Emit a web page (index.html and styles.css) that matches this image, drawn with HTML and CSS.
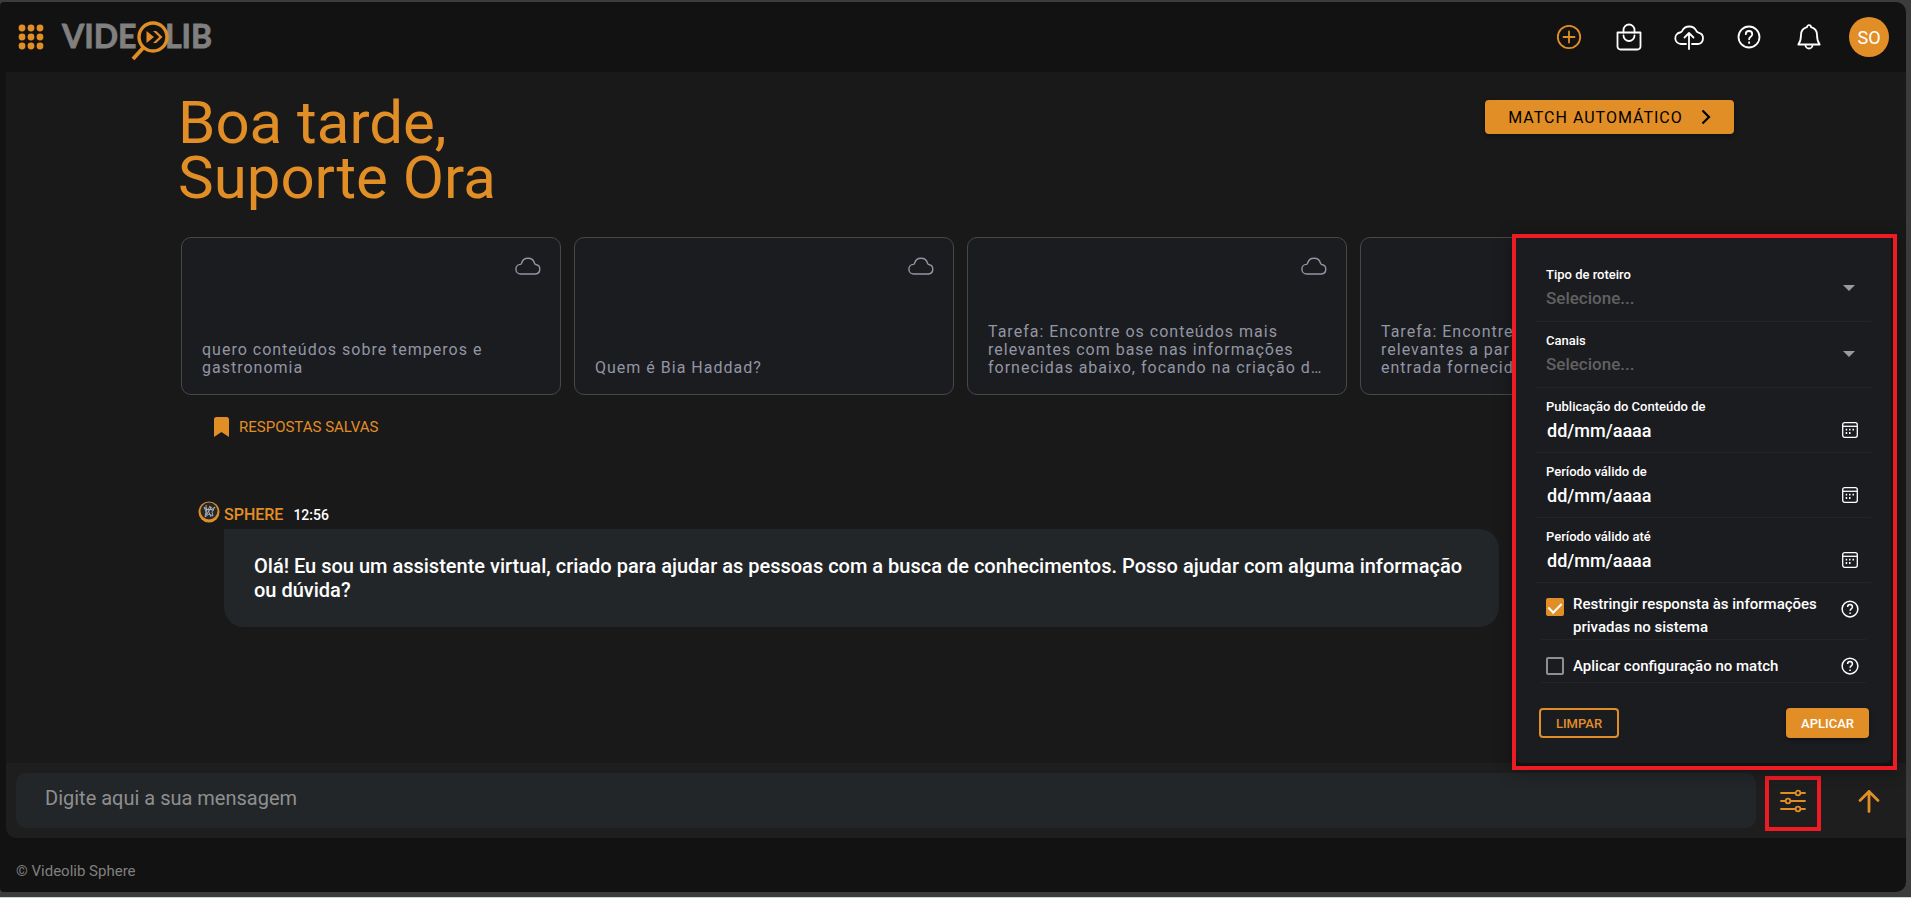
FILE: index.html
```html
<!DOCTYPE html>
<html lang="pt-BR">

<head>
    <meta charset="UTF-8">
    <meta name="viewport" content="width=device-width, initial-scale=1.0">
    <title>Videolib Sphere</title>
    <link rel="stylesheet" href="styles.css">
</head>

<body>
    <div class="window">
        <header class="topbar">
            <button class="icon-btn apps" aria-label="Aplicativos">
                <svg width="26" height="26" viewBox="0 0 26 26" fill="currentColor">
                    <circle cx="4" cy="4" r="3.4"/><circle cx="13" cy="4" r="3.4"/><circle cx="22" cy="4" r="3.4"/>
                    <circle cx="4" cy="13" r="3.4"/><circle cx="13" cy="13" r="3.4"/><circle cx="22" cy="13" r="3.4"/>
                    <circle cx="4" cy="22" r="3.4"/><circle cx="13" cy="22" r="3.4"/><circle cx="22" cy="22" r="3.4"/>
                </svg>
            </button>
            <a href="#" class="logo" aria-label="Videolib">
                <svg width="152" height="42" viewBox="0 0 152 42">
                    <text x="0" y="29" class="logo-text">VIDE</text>
                    <text x="103" y="29" class="logo-text">LIB</text>
                    <circle cx="91" cy="18" r="15" fill="#121212"/>
                    <circle cx="91" cy="18" r="14" fill="none" stroke="#e28e26" stroke-width="3.4"/>
                    <path d="M81 29 71 40" fill="none" stroke="#e28e26" stroke-width="4"/>
                    <path d="M84.500 12v12l7.500-6zM91 12h3.200l6.300 6-6.300 6H91l6.300-6z" fill="#e28e26"/>
                </svg>
            </a>
            <nav class="tools">
                <button class="icon-btn orange" aria-label="Novo">
                    <svg width="26" height="26" viewBox="0 0 26 26">
                        <circle cx="13" cy="13" r="11.200"/><path d="M13 7.500v11M7.500 13h11"/>
                    </svg>
                </button>
                <button class="icon-btn" aria-label="Loja">
                    <svg width="28" height="28" viewBox="0 0 28 28">
                        <path d="M2.500 9.500h23v14a3 3 0 0 1-3 3h-17a3 3 0 0 1-3-3z"/>
                        <path d="M8.500 9.500V7a5.500 5.500 0 0 1 11 0v2.500M8.500 12.500a5.500 5.500 0 0 0 11 0"/>
                    </svg>
                </button>
                <button class="icon-btn" aria-label="Enviar">
                    <svg width="32" height="28" viewBox="0 0 32 28">
                        <path d="M13 21H8A5.800 5.800 0 0 1 7 9.500c1-.2 1.500-.5 2-1.400a8 8 0 0 1 14.500 0c.4.900.9 1.200 2 1.500A5.800 5.800 0 0 1 25 21h-6"/>
                        <path d="M16 26V10M11.500 14.500 16 10l4.500 4.500"/>
                    </svg>
                </button>
                <button class="icon-btn" aria-label="Ajuda">
                    <svg width="24" height="24" viewBox="0 0 24 24">
                        <circle cx="12" cy="12" r="10.500"/>
                        <path d="M8.800 9.200a3.200 3.200 0 0 1 6.400 0c0 2.600-3.100 2.500-3.100 5M12.100 17.200v.8"/>
                    </svg>
                </button>
                <button class="icon-btn" aria-label="Notificações">
                    <svg width="26" height="28" viewBox="0 0 26 28">
                        <path d="M11 4.200a2 2 0 0 1 4 0c4 1 6 3.800 6 7.800 0 5 .8 7 2.700 9.500H2.300C4.200 19 5 17 5 12c0-4 2-6.800 6-7.800z"/>
                        <path d="M9.500 22a3.500 3.500 0 0 0 7 0"/>
                    </svg>
                </button>
                <button class="avatar">SO</button>
            </nav>
        </header>

        <main class="content">
            <section class="intro">
                <h1>Boa tarde,<br>Suporte Ora</h1>
                <button class="match-btn">MATCH AUTOMÁTICO
                    <svg width="10" height="16" viewBox="0 0 10 16"><path d="M1.500 1.500 8 8l-6.500 6.500"/></svg>
                </button>
            </section>

            <section class="cards">
                <article class="card">
                    <svg class="cloud" width="26" height="20" viewBox="0 0 26 20"><path d="M6 18a4.800 4.800 0 0 1-.6-9.600c.8-.1 1-.4 1.200-1.200a6.700 6.700 0 0 1 12.900 0c.2.800.5 1.100 1.300 1.300A4.800 4.800 0 0 1 20.500 18z"/></svg>
                    <p>quero conteúdos sobre temperos e gastronomia</p>
                </article>
                <article class="card">
                    <svg class="cloud" width="26" height="20" viewBox="0 0 26 20"><path d="M6 18a4.800 4.800 0 0 1-.6-9.600c.8-.1 1-.4 1.200-1.200a6.700 6.700 0 0 1 12.900 0c.2.800.5 1.100 1.300 1.300A4.800 4.800 0 0 1 20.500 18z"/></svg>
                    <p>Quem é Bia Haddad?</p>
                </article>
                <article class="card">
                    <svg class="cloud" width="26" height="20" viewBox="0 0 26 20"><path d="M6 18a4.800 4.800 0 0 1-.6-9.600c.8-.1 1-.4 1.200-1.200a6.700 6.700 0 0 1 12.900 0c.2.800.5 1.100 1.300 1.300A4.800 4.800 0 0 1 20.500 18z"/></svg>
                    <p>Tarefa: Encontre os conteúdos mais relevantes com base nas informações fornecidas abaixo, focando na criação d…</p>
                </article>
                <article class="card">
                    <svg class="cloud" width="26" height="20" viewBox="0 0 26 20"><path d="M6 18a4.800 4.800 0 0 1-.6-9.600c.8-.1 1-.4 1.200-1.200a6.700 6.700 0 0 1 12.900 0c.2.800.5 1.100 1.300 1.300A4.800 4.800 0 0 1 20.500 18z"/></svg>
                    <p>Tarefa: Encontre<br>relevantes a par<br>entrada fornecid</p>
                </article>
            </section>

            <button class="saved-btn">
                <svg width="15" height="20" viewBox="0 0 15 20"><path d="M2.500 0h10A2.500 2.500 0 0 1 15 2.500V20l-7.500-5L0 20V2.500A2.500 2.500 0 0 1 2.500 0z" fill="currentColor"/></svg>
                RESPOSTAS SALVAS
            </button>

            <section class="message">
                <div class="message-head">
                    <svg width="22" height="22" viewBox="0 0 22 22">
                        <circle cx="11" cy="11" r="10.500" fill="#e28e26"/>
                        <circle cx="11" cy="10" r="8.500" fill="#24282d"/>
                        <path d="m6 6 4 3 2-4 1 4 4-3-3 5 1 4-4-2-4 3 1-5zM8 4l1 10M14 6 8 14M7 8l9 1M10 9l3 7" fill="none" stroke="#b5b5b5" stroke-width=".9"/>
                    </svg>
                    <strong>SPHERE</strong>
                    <time>12:56</time>
                </div>
                <p class="bubble">Olá! Eu sou um assistente virtual, criado para ajudar as pessoas com a busca de conhecimentos. Posso ajudar com alguma informação ou dúvida?</p>
            </section>
        </main>

        <form class="composer">
            <input type="text" class="message-input" placeholder="Digite aqui a sua mensagem" aria-label="Mensagem">
            <button type="button" class="icon-btn filter-btn" aria-label="Filtros">
                <svg width="26" height="24" viewBox="0 0 26 24">
                    <path d="M1 4h14M21 4h4M1 12h4M11 12h14M1 20h14M21 20h4"/>
                    <circle cx="18" cy="4" r="2.300"/><circle cx="8" cy="12" r="2.300"/><circle cx="18" cy="20" r="2.300"/>
                </svg>
            </button>
            <button type="button" class="icon-btn send-btn" aria-label="Enviar mensagem">
                <svg width="22" height="24" viewBox="0 0 22 24"><path d="M11 22.500V2.500M2 11.500l9-9 9 9"/></svg>
            </button>

            <div class="highlight">
                <div class="panel">
                    <div class="field">
                        <div class="field-main">
                            <label for="tipo">Tipo de roteiro</label>
                            <select id="tipo"><option>Selecione...</option></select>
                        </div>
                        <svg class="caret" width="12" height="6" viewBox="0 0 12 6"><path d="M0 0h12L6 6z"/></svg>
                    </div>
                    <div class="field">
                        <div class="field-main">
                            <label for="canais">Canais</label>
                            <select id="canais"><option>Selecione...</option></select>
                        </div>
                        <svg class="caret" width="12" height="6" viewBox="0 0 12 6"><path d="M0 0h12L6 6z"/></svg>
                    </div>
                    <div class="field date">
                        <div class="field-main">
                            <label for="publicacao">Publicação do Conteúdo de</label>
                            <input type="text" id="publicacao" placeholder="dd/mm/aaaa">
                        </div>
                        <svg width="16" height="16" viewBox="0 0 16 16"><rect x=".7" y=".7" width="14.600" height="14.600" rx="2"/><path d="M1 4.300h14"/><path class="dots" d="M3.700 7.700h1.500M7 7.700h1.500M10.500 7.700H12M3.700 11h1.500M7 11h1.500"/></svg>
                    </div>
                    <div class="field date">
                        <div class="field-main">
                            <label for="validoDe">Período válido de</label>
                            <input type="text" id="validoDe" placeholder="dd/mm/aaaa">
                        </div>
                        <svg width="16" height="16" viewBox="0 0 16 16"><rect x=".7" y=".7" width="14.600" height="14.600" rx="2"/><path d="M1 4.300h14"/><path class="dots" d="M3.700 7.700h1.500M7 7.700h1.500M10.500 7.700H12M3.700 11h1.500M7 11h1.500"/></svg>
                    </div>
                    <div class="field date">
                        <div class="field-main">
                            <label for="validoAte">Período válido até</label>
                            <input type="text" id="validoAte" placeholder="dd/mm/aaaa">
                        </div>
                        <svg width="16" height="16" viewBox="0 0 16 16"><rect x=".7" y=".7" width="14.600" height="14.600" rx="2"/><path d="M1 4.300h14"/><path class="dots" d="M3.700 7.700h1.500M7 7.700h1.500M10.500 7.700H12M3.700 11h1.500M7 11h1.500"/></svg>
                    </div>
                    <div class="check-row">
                        <input type="checkbox" id="restringir" checked>
                        <label for="restringir">Restringir responsta às informações privadas no sistema</label>
                        <svg width="18" height="18" viewBox="0 0 24 24"><circle cx="12" cy="12" r="10.500"/><path d="M8.800 9.200a3.200 3.200 0 0 1 6.400 0c0 2.600-3.100 2.500-3.100 5M12.100 16.600v1.900"/></svg>
                    </div>
                    <div class="check-row single">
                        <input type="checkbox" id="aplicarMatch">
                        <label for="aplicarMatch">Aplicar configuração no match</label>
                        <svg width="18" height="18" viewBox="0 0 24 24"><circle cx="12" cy="12" r="10.500"/><path d="M8.800 9.200a3.200 3.200 0 0 1 6.400 0c0 2.600-3.100 2.500-3.100 5M12.100 16.600v1.900"/></svg>
                    </div>
                    <div class="actions">
                        <button type="reset" class="clear-btn">LIMPAR</button>
                        <button type="button" class="apply-btn">APLICAR</button>
                    </div>
                </div>
            </div>
        </form>

        <footer class="footer">© Videolib Sphere</footer>
    </div>
</body>

</html>
```
FILE: styles.css
```css
* {
    box-sizing: border-box;
}

body {
    font-family: Roboto, 'Liberation Sans', sans-serif;
    background: #3c3c3c;
    color: #ffffff;
    margin: 0;
    min-height: 100vh;
    padding: 2px 5px 5px 0;
    border-bottom: 1px solid #c9d3d0;
    display: flex;
}

button {
    font-family: inherit;
    border: none;
    padding: 0;
    cursor: pointer;
}

.window {
    flex: 1;
    min-width: 0;
    display: flex;
    flex-direction: column;
    background: #121212;
    border-radius: 4px 10px 10px 4px;
}

/* Top bar */
.topbar {
    height: 70px;
    display: flex;
    align-items: center;
    padding: 0 17px 0 18px;
}

.icon-btn {
    background: none;
    color: #ffffff;
    display: flex;
    align-items: center;
    justify-content: center;
}

.icon-btn svg {
    fill: none;
    stroke: currentColor;
    stroke-width: 1.8;
    stroke-linecap: round;
    stroke-linejoin: round;
}

.apps,
.orange,
.filter-btn,
.send-btn {
    color: #e28e26;
}

.apps svg {
    fill: currentColor;
    stroke: none;
}

.logo {
    display: flex;
    margin: 6px 0 0 18px;
}

.logo svg {
    overflow: visible;
}

.logo-text {
    font-family: Lato, sans-serif;
    font-size: 32px;
    font-weight: 700;
    fill: #808080;
    stroke: #808080;
    stroke-width: 0.8;
}

.tools {
    margin-left: auto;
    display: flex;
    align-items: center;
}

.tools .icon-btn {
    width: 60px;
    height: 40px;
}

.avatar {
    width: 40px;
    height: 40px;
    margin-left: 10px;
    border-radius: 50%;
    background: #e28e26;
    color: #ffffff;
    font-size: 18px;
}

/* Main area */
.content {
    flex: 1;
    margin-left: 6px;
    padding: 23px 172px 0;
    background: #191919;
    overflow: hidden;
}

.intro {
    display: flex;
    justify-content: space-between;
    align-items: flex-start;
}

h1 {
    margin: 0;
    font-size: 60px;
    line-height: 55px;
    font-weight: 400;
    color: #e28e26;
}

.match-btn {
    width: 249px;
    height: 34px;
    margin-top: 5px;
    display: flex;
    align-items: center;
    justify-content: center;
    gap: 18px;
    background: #e28e26;
    border-radius: 4px;
    color: #000000;
    font-size: 16px;
    letter-spacing: 1px;
    box-shadow: 0 2px 4px rgba(0, 0, 0, 0.4);
}

.match-btn svg {
    fill: none;
    stroke: #000000;
    stroke-width: 2.2;
}

.cards {
    display: flex;
    gap: 13px;
    margin: 32px 0 0 3px;
}

.card {
    flex: 0 0 380px;
    height: 158px;
    display: flex;
    flex-direction: column;
    justify-content: space-between;
    padding: 18px 19px 17px 20px;
    background: #1b1c20;
    border: 1px solid #484848;
    border-radius: 10px;
}

.cloud {
    align-self: flex-end;
    fill: none;
    stroke: #9296a3;
    stroke-width: 1.4;
}

.card p {
    margin: 0;
    font-size: 16px;
    line-height: 18px;
    letter-spacing: 1px;
    color: #9296a3;
}

.saved-btn {
    display: flex;
    align-items: center;
    gap: 10px;
    height: 24px;
    margin: 20px 0 0 36px;
    background: none;
    color: #e28e26;
    font-size: 15px;
}

.message {
    margin: 62px 235px 0 20px;
}

.message-head {
    display: flex;
    align-items: baseline;
    gap: 4px;
    height: 28px;
}

.message-head svg {
    align-self: flex-start;
}

.message-head strong {
    font-size: 16px;
    line-height: 28px;
    font-weight: 500;
    color: #e28e26;
}

.message-head time {
    margin-left: 6px;
    font-size: 14px;
    font-weight: 500;
}

.bubble {
    margin: 0 0 0 26px;
    padding: 25px 30px;
    background: #232629;
    border-radius: 0 20px 20px 20px;
    font-size: 20px;
    line-height: 24px;
    font-weight: 500;
}

/* Message bar */
.composer {
    position: relative;
    display: flex;
    align-items: center;
    height: 75px;
    margin-left: 6px;
    padding: 0 15px 0 10px;
    background: #1e1e1e;
    border-radius: 0 0 0 10px;
}

.message-input {
    flex: 1;
    min-width: 0;
    height: 55px;
    padding: 0 29px 6px;
    background: #232629;
    border: none;
    border-radius: 10px;
    color: #ffffff;
    font-family: inherit;
    font-size: 20px;
}

.message-input::placeholder {
    color: #8f8f8f;
    opacity: 1;
}

.filter-btn {
    width: 56px;
    height: 55px;
    margin: 5px 25px 0 9px;
    padding-bottom: 5px;
    border: 4px solid #ed1c24;
}

.send-btn {
    width: 45px;
    height: 55px;
}

.send-btn svg {
    stroke-width: 2.8;
}

/* Filter popup */
.highlight {
    position: absolute;
    right: 9px;
    bottom: 68px;
    width: 385px;
    padding: 0 2px 3px 0;
    background: #121212;
    border: 4px solid #ed1c24;
    box-shadow: 0 2px 16px rgba(0, 0, 0, 0.3);
}

.panel {
    padding: 18px 20px 25px;
    background: #1b1c20;
    border-radius: 0 0 6px 6px;
}

.field {
    height: 66px;
    display: flex;
    align-items: center;
    padding: 0 16px 0 10px;
    border-bottom: 1px solid #242424;
}

.field-main {
    flex: 1;
    min-width: 0;
    align-self: flex-start;
    padding-top: 11px;
}

.field label {
    display: block;
    margin-bottom: 3px;
    font-size: 13px;
    line-height: 16px;
    font-weight: 500;
}

.field select,
.field input {
    display: block;
    width: 100%;
    height: 24px;
    padding: 0;
    background: none;
    border: none;
    appearance: none;
    color: #616161;
    font-family: inherit;
    font-size: 17px;
    font-weight: 500;
}

.field input {
    padding-left: 1px;
    color: #ffffff;
    font-size: 18px;
}

.caret {
    margin-bottom: 2px;
    fill: #9b9b9b;
}

.date {
    height: 65px;
    padding-right: 13px;
}

.date input::placeholder {
    color: #ffffff;
    opacity: 1;
}

.date svg {
    margin-top: 20px;
    fill: none;
    stroke: #ffffff;
    stroke-width: 1.3;
}

.date .dots {
    stroke-width: 1.8;
}

.check-row {
    display: flex;
    align-items: flex-start;
    margin: 0 5px;
    padding: 10px 7px 0 5px;
    height: 57px;
    border-bottom: 1px solid #242424;
}

.check-row.single {
    height: 43px;
    padding-top: 15px;
}

.check-row input {
    appearance: none;
    flex: none;
    width: 18px;
    height: 18px;
    margin: 5px 9px 0 0;
    border: 2px solid #8f8f8f;
    border-radius: 2px;
}

.check-row.single input {
    margin-top: 2px;
}

.check-row input:checked {
    display: flex;
    justify-content: center;
    background: #e28e26;
    border-color: #e28e26;
}

.check-row input:checked::after {
    content: "";
    width: 6px;
    height: 11px;
    border: solid #ffffff;
    border-width: 0 2px 2px 0;
    transform: rotate(45deg);
}

.check-row label {
    flex: 1;
    font-size: 15px;
    line-height: 23px;
    font-weight: 500;
}

.check-row svg {
    margin: 7px 0 0 18px;
    fill: none;
    stroke: #ffffff;
    stroke-width: 2;
}

.check-row.single svg {
    margin-top: 2px;
}

.actions {
    display: flex;
    justify-content: space-between;
    margin: 25px 2px 0 3px;
}

.actions button {
    height: 30px;
    border-radius: 4px;
    font-size: 13px;
    font-weight: 500;
}

.clear-btn {
    width: 80px;
    background: none;
    border: 2px solid #e28e26;
    color: #e28e26;
}

.apply-btn {
    width: 83px;
    background: #e28e26;
    color: #ffffff;
    box-shadow: 0 2px 4px rgba(0, 0, 0, 0.4);
}

.footer {
    height: 54px;
    padding: 24px 16px 0;
    color: #808080;
    font-size: 15px;
    line-height: 18px;
}
```
